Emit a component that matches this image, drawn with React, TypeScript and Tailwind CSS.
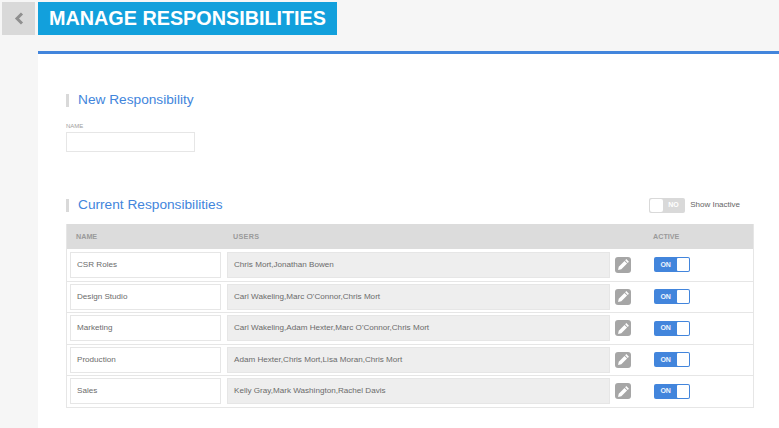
import React from 'react';

const rows = [
    { name: 'CSR Roles', users: 'Chris Mort,Jonathan Bowen' },
    { name: 'Design Studio', users: "Carl Wakeling,Marc O'Connor,Chris Mort" },
    { name: 'Marketing', users: "Carl Wakeling,Adam Hexter,Marc O'Connor,Chris Mort" },
    { name: 'Production', users: 'Adam Hexter,Chris Mort,Lisa Moran,Chris Mort' },
    { name: 'Sales', users: 'Kelly Gray,Mark Washington,Rachel Davis' },
];

const Pencil = () => (
    <div className="w-[16px] h-[16px] rounded-[3px] bg-[#a6a6a6] flex items-center justify-center">
        <svg width="13" height="13" viewBox="0 0 12 12" fill="#fff">
            <path d="M8.6 1 11 3.4 9.9 4.5 7.5 2.1Z" />
            <path d="M6.9 2.7 9.3 5.1 4 10.4 1 11 1.6 8Z" />
        </svg>
    </div>
);

const Toggle = () => (
    <div className="w-[36px] h-[15px] rounded-[2px] bg-[#4285dc] flex items-center pr-[1px]">
        <span className="w-[24px] text-center text-[7px] font-bold text-[#eef4fc]">ON</span>
        <span className="ml-auto w-[12px] h-[13px] rounded-[1px] bg-white" />
    </div>
);

const SectionTitle = ({ children }: { children: React.ReactNode }) => (
    <div className="flex items-center gap-[9px]">
        <span className="w-[3px] h-[13px] bg-[#d9d9d9]" />
        <span className="text-[13.7px] leading-[14px] text-[#4285dc]">{children}</span>
    </div>
);

export default function App() {
    return (
        <div className="w-[779px] h-[428px] overflow-hidden bg-[#f6f6f6] font-['Liberation_Sans',sans-serif]">
            <div className="flex gap-[3px] pt-[2px] pl-[2px] h-[51px]">
                <div className="w-[33px] h-[33px] bg-[#d9d9d9] flex items-center justify-center">
                    <svg width="10" height="13" viewBox="0 0 10 13" fill="none" stroke="#8f8f8f" strokeWidth="3">
                        <path d="M8 1.5 3 6.5l5 5" />
                    </svg>
                </div>
                <div className="w-[299px] h-[33px] bg-[#12a0dc] pl-[11px] flex items-center whitespace-nowrap text-[19.8px] font-bold text-white">
                    MANAGE RESPONSIBILITIES
                </div>
            </div>

            <div className="ml-[38px] h-[377px] bg-white border-t-[3px] border-[#4285dc] pl-[28px] pr-[25px] pt-[39px]">
                <SectionTitle>New Responsibility</SectionTitle>

                <div className="mt-[16px] text-[6px] leading-[7px] text-[#a0a0a0]">NAME</div>
                <div className="mt-[2px] w-[129px] h-[20px] border border-[#e6e6e6] bg-white" />

                <div className="mt-[43px] h-[20px] flex items-center justify-between">
                    <SectionTitle>Current Responsibilities</SectionTitle>
                    <div className="flex items-center gap-[5px] pr-[14px]">
                        <div className="w-[36px] h-[15px] rounded-[2px] bg-[#d9d9d9] flex items-center pl-[1px]">
                            <span className="w-[13px] h-[13px] rounded-[2px] bg-white" />
                            <span className="ml-[5px] text-[7px] font-bold text-white">NO</span>
                        </div>
                        <span className="text-[8px] text-[#666]">Show Inactive</span>
                    </div>
                </div>

                <div className="mt-[9px] border border-[#e6e6e6] border-t-0 w-[688px]">
                    <div className="h-[25px] pt-[2px] bg-[#dcdcdc] flex items-center text-[7.2px] font-bold text-[#9a9a9a]">
                        <span className="w-[166px] pl-[9px]">NAME</span>
                        <span className="w-[420px] tracking-[0.3px]">USERS</span>
                        <span>ACTIVE</span>
                    </div>
                    {rows.map((r, i) => (
                        <div key={r.name} className={`h-[31.5px] flex items-center pl-[3px] text-[8.1px] text-[#6b6b6b] ${i > 0 ? 'border-t border-[#e6e6e6]' : ''}`}>
                            <div className="w-[151px] h-[26px] border border-[#e6e6e6] bg-white flex items-center pl-[6px]">{r.name}</div>
                            <div className="ml-[6px] w-[383px] h-[26px] border border-[#e6e6e6] bg-[#eeeeee] flex items-center pl-[6px]">{r.users}</div>
                            <div className="ml-[5px]"><Pencil /></div>
                            <div className="ml-[23px]"><Toggle /></div>
                        </div>
                    ))}
                </div>
            </div>
        </div>
    );
}
